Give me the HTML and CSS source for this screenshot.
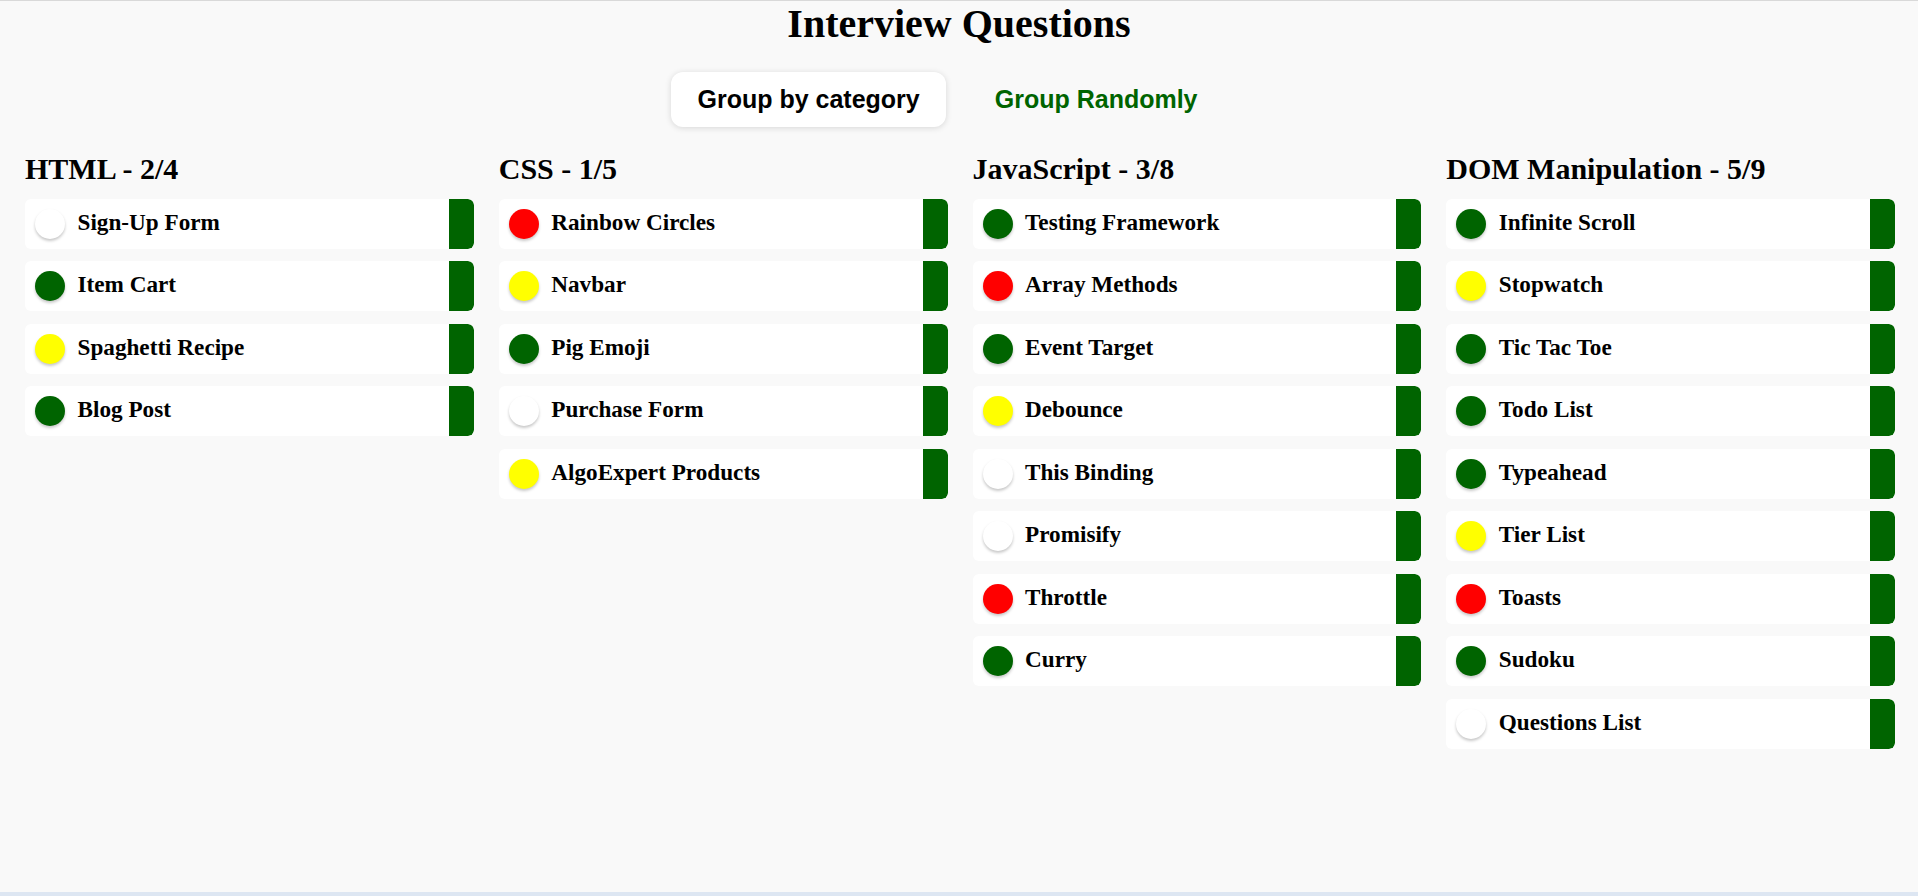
FILE: index.html
```html
<!DOCTYPE html>
<html lang="en">
<head>
<meta charset="utf-8">
<title>Interview Questions</title>
<link rel="stylesheet" href="styles.css">
</head>
<body>
<main class="app">
  <h1 class="title">Interview Questions</h1>
  <div class="toggle-row">
    <button class="toggle toggle-active">Group by category</button>
    <button class="toggle toggle-link">Group Randomly</button>
  </div>
  <div class="columns">
    <section class="category">
      <h2 class="category-title">HTML - 2/4</h2>
      <ul class="question-list">
        <li class="question"><span class="status status-none"></span><span class="question-name">Sign-Up Form</span><span class="question-bar"></span></li>
        <li class="question"><span class="status status-done"></span><span class="question-name">Item Cart</span><span class="question-bar"></span></li>
        <li class="question"><span class="status status-partial"></span><span class="question-name">Spaghetti Recipe</span><span class="question-bar"></span></li>
        <li class="question"><span class="status status-done"></span><span class="question-name">Blog Post</span><span class="question-bar"></span></li>
      </ul>
    </section>
    <section class="category">
      <h2 class="category-title">CSS - 1/5</h2>
      <ul class="question-list">
        <li class="question"><span class="status status-fail"></span><span class="question-name">Rainbow Circles</span><span class="question-bar"></span></li>
        <li class="question"><span class="status status-partial"></span><span class="question-name">Navbar</span><span class="question-bar"></span></li>
        <li class="question"><span class="status status-done"></span><span class="question-name">Pig Emoji</span><span class="question-bar"></span></li>
        <li class="question"><span class="status status-none"></span><span class="question-name">Purchase Form</span><span class="question-bar"></span></li>
        <li class="question"><span class="status status-partial"></span><span class="question-name">AlgoExpert Products</span><span class="question-bar"></span></li>
      </ul>
    </section>
    <section class="category">
      <h2 class="category-title">JavaScript - 3/8</h2>
      <ul class="question-list">
        <li class="question"><span class="status status-done"></span><span class="question-name">Testing Framework</span><span class="question-bar"></span></li>
        <li class="question"><span class="status status-fail"></span><span class="question-name">Array Methods</span><span class="question-bar"></span></li>
        <li class="question"><span class="status status-done"></span><span class="question-name">Event Target</span><span class="question-bar"></span></li>
        <li class="question"><span class="status status-partial"></span><span class="question-name">Debounce</span><span class="question-bar"></span></li>
        <li class="question"><span class="status status-none"></span><span class="question-name">This Binding</span><span class="question-bar"></span></li>
        <li class="question"><span class="status status-none"></span><span class="question-name">Promisify</span><span class="question-bar"></span></li>
        <li class="question"><span class="status status-fail"></span><span class="question-name">Throttle</span><span class="question-bar"></span></li>
        <li class="question"><span class="status status-done"></span><span class="question-name">Curry</span><span class="question-bar"></span></li>
      </ul>
    </section>
    <section class="category">
      <h2 class="category-title">DOM Manipulation - 5/9</h2>
      <ul class="question-list">
        <li class="question"><span class="status status-done"></span><span class="question-name">Infinite Scroll</span><span class="question-bar"></span></li>
        <li class="question"><span class="status status-partial"></span><span class="question-name">Stopwatch</span><span class="question-bar"></span></li>
        <li class="question"><span class="status status-done"></span><span class="question-name">Tic Tac Toe</span><span class="question-bar"></span></li>
        <li class="question"><span class="status status-done"></span><span class="question-name">Todo List</span><span class="question-bar"></span></li>
        <li class="question"><span class="status status-done"></span><span class="question-name">Typeahead</span><span class="question-bar"></span></li>
        <li class="question"><span class="status status-partial"></span><span class="question-name">Tier List</span><span class="question-bar"></span></li>
        <li class="question"><span class="status status-fail"></span><span class="question-name">Toasts</span><span class="question-bar"></span></li>
        <li class="question"><span class="status status-done"></span><span class="question-name">Sudoku</span><span class="question-bar"></span></li>
        <li class="question"><span class="status status-none"></span><span class="question-name">Questions List</span><span class="question-bar"></span></li>
      </ul>
    </section>
  </div>
</main>
<div class="bottom-strip"></div>
</body>
</html>
```

FILE: styles.css
```css
html {
  height: 100%;
}

body {
  margin: 0;
  min-height: 100%;
  box-sizing: border-box;
  display: flex;
  flex-direction: column;
  background: #f9f9f9;
  border-top: 1px solid #d9d9d9;
  font-family: "Liberation Serif", "Times New Roman", serif;
  color: #000;
}

.app {
  flex: 1;
}

.title {
  margin: 0;
  font-size: 40px;
  line-height: 46px;
  font-weight: bold;
  text-align: center;
}

.toggle-row {
  display: flex;
  justify-content: center;
  gap: 23px;
  margin-top: 25px;
  padding-right: 23px;
}

.toggle {
  font-family: "Liberation Sans", Arial, sans-serif;
  font-size: 25px;
  font-weight: bold;
  line-height: 25px;
  padding: 15px 26px;
  border: none;
  border-radius: 12px;
  background: transparent;
  cursor: pointer;
}

.toggle-active {
  background: #fff;
  color: #000;
  box-shadow: 0 1px 6px rgba(0, 0, 0, 0.14);
}

.toggle-link {
  color: #006400;
}

.columns {
  display: grid;
  grid-template-columns: repeat(4, 1fr);
  gap: 25px;
  padding: 0 23px 0 25px;
  margin-top: 25.4px;
  align-items: start;
}

.category-title {
  margin: 0 0 12.6px;
  font-size: 30px;
  line-height: 34px;
  font-weight: bold;
}

.question-list {
  list-style: none;
  margin: 0;
  padding: 0;
  display: flex;
  flex-direction: column;
  gap: 12.5px;
}

.question {
  display: flex;
  align-items: center;
  height: 50px;
  background: #fff;
  border-radius: 6px;
  overflow: hidden;
  padding-left: 10px;
}

.status {
  flex: none;
  width: 30px;
  height: 30px;
  border-radius: 50%;
  box-shadow: 0 2px 3px rgba(0, 0, 0, 0.22);
  background: #fff;
}

.status-done {
  background: #006400;
}

.status-fail {
  background: #ff0000;
}

.status-partial {
  background: #ffff00;
}

.status-none {
  background: #fff;
}

.question-name {
  flex: 1;
  margin-left: 12.5px;
  margin-bottom: 3px;
  font-size: 23.2px;
  font-weight: bold;
  white-space: nowrap;
}

.question-bar {
  flex: none;
  align-self: stretch;
  width: 25px;
  background: #006400;
  border-radius: 0 6px 6px 0;
}

.bottom-strip {
  height: 4px;
  background: #dde6f2;
}
```
